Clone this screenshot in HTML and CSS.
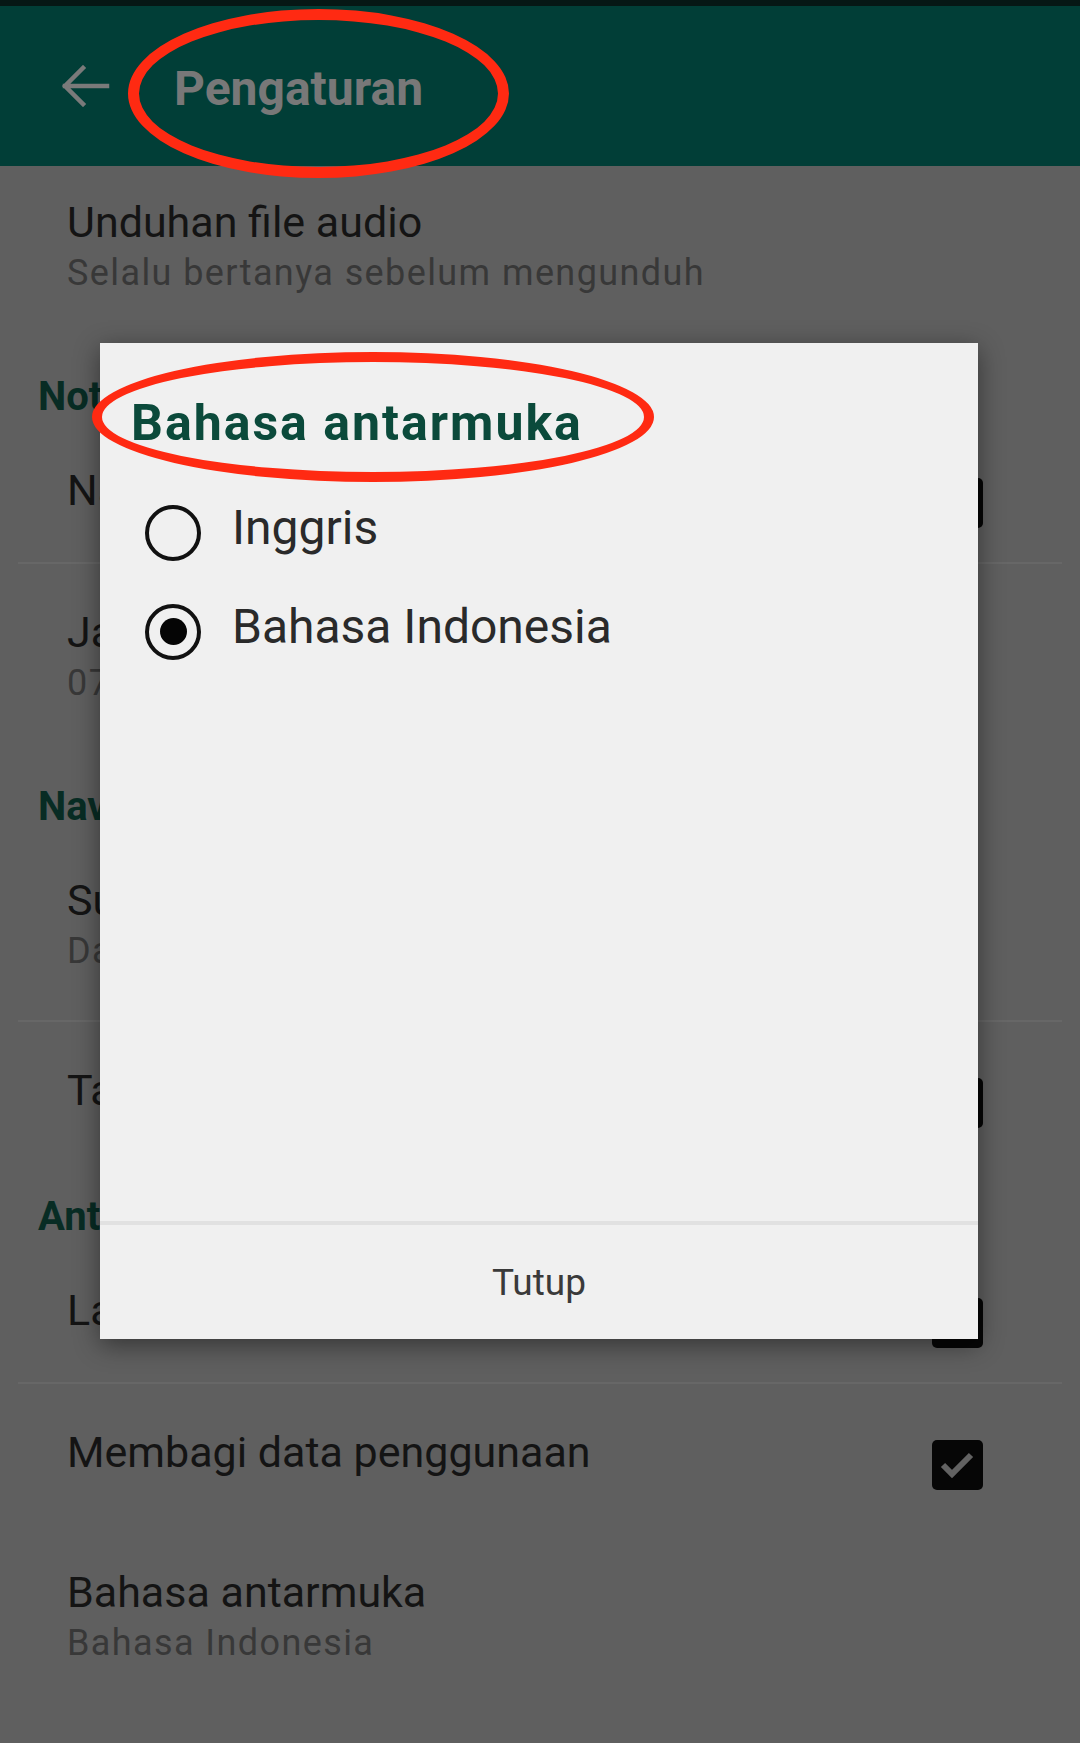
FILE: index.html
```html
<!DOCTYPE html>
<html lang="id">
	<head>
		<title>Pengaturan</title>
		<meta charset="UTF-8">
		<meta content="width=device-width,initial-scale=1.0" name="viewport">
		<link rel="stylesheet" href="styles.css">
	</head>
	<body>
		<div id="statusBar"></div>
		<div id="appBar">
			<svg class="back" width="50" height="42" viewBox="0 0 50 42">
				<path d="M47 21 H5 M23 3 L5 21 L23 39" fill="none" stroke="#7a7a7a" stroke-width="4.5" stroke-linecap="square"/>
			</svg>
			<h1>Pengaturan</h1>
			<div class="mark markTitle"></div>
		</div>

		<div id="settings">
			<div class="item">
				<div class="text">
					<div class="title">Unduhan file audio</div>
					<div class="sub">Selalu bertanya sebelum mengunduh</div>
				</div>
			</div>

			<h3 class="group">Notifikasi</h3>
			<div class="item divided">
				<div class="text"><div class="title">Nada notifikasi</div></div>
				<div class="check"></div>
			</div>
			<div class="item">
				<div class="text">
					<div class="title">Jadwal pengingat</div>
					<div class="sub">07:00</div>
				</div>
			</div>

			<h3 class="group">Navigasi</h3>
			<div class="item divided">
				<div class="text">
					<div class="title">Surah pembuka</div>
					<div class="sub">Daftar surah</div>
				</div>
			</div>
			<div class="item">
				<div class="text"><div class="title">Tampilkan terjemahan</div></div>
				<div class="check"></div>
			</div>

			<h3 class="group">Antarmuka</h3>
			<div class="item divided">
				<div class="text"><div class="title">Layar tetap menyala</div></div>
				<div class="check"></div>
			</div>
			<div class="item">
				<div class="text"><div class="title">Membagi data penggunaan</div></div>
				<div class="check">
					<svg width="51" height="50" viewBox="0 0 51 50">
						<path d="M11 25 L20 34 L39 15" fill="none" stroke="#626262" stroke-width="6"/>
					</svg>
				</div>
			</div>
			<div class="item">
				<div class="text">
					<div class="title">Bahasa antarmuka</div>
					<div class="sub">Bahasa Indonesia</div>
				</div>
			</div>
		</div>

		<div id="dialog">
			<h2 class="dlgTitle">Bahasa antarmuka</h2>
			<div class="options">
				<div class="option"><span class="radio"></span><span class="label">Inggris</span></div>
				<div class="option"><span class="radio on"></span><span class="label">Bahasa Indonesia</span></div>
			</div>
			<div class="dlgLine"></div>
			<div class="dlgBtn">Tutup</div>
		</div>
		<div class="mark markDialog"></div>
	</body>
</html>
```

FILE: styles.css
```css
body{margin:0;background:#5f5f5f;font-family:Roboto,"Noto Sans",sans-serif;overflow:hidden;}
#statusBar{height:6px;background:#061715;}
#appBar{height:160px;background:#013e37;display:flex;align-items:center;position:relative;z-index:2;}
#appBar .back{margin-left:60px;}
#appBar h1{margin:4px 0 0 64px;font-size:48px;font-weight:700;color:#787878;}

#settings{margin-top:-12px;}
.item{display:flex;align-items:flex-start;padding:43px 97px 47px 67px;}
.item .text{flex:1;}
.item.divided{border-bottom:2px solid #676767;margin:0 18px;padding-left:49px;padding-right:79px;}
.title{font-size:43px;line-height:50px;color:#141414;}
.sub{font-size:36px;line-height:44px;margin-top:4px;letter-spacing:1.4px;color:#383838;}
.group{margin:0;padding:30px 0 0 38px;font-size:40px;line-height:50px;font-weight:700;color:#082c24;}
.check{width:51px;height:50px;margin:13px 0 -13px;background:#060606;border-radius:5px;}
.check svg{display:block;}

#dialog{position:absolute;left:100px;top:343px;width:878px;height:996px;background:#f0f0f0;
	display:flex;flex-direction:column;box-shadow:0 6px 24px rgba(0,0,0,0.45);}
.dlgTitle{margin:0;padding:52px 0 0 31px;font-size:50px;line-height:56px;letter-spacing:2px;font-weight:700;color:#0b4a3b;}
.options{flex:1;padding:32px 0 0 45px;}
.option{display:flex;align-items:center;height:99px;}
.radio{width:56px;height:56px;box-sizing:border-box;border:4px solid #111;border-radius:50%;
	display:flex;align-items:center;justify-content:center;}
.radio.on::after{content:"";width:27px;height:27px;border-radius:50%;background:#050505;}
.label{margin:0 0 10px 31px;font-size:48px;color:#2a2a2a;}
.dlgLine{height:4px;background:#e1e1e1;}
.dlgBtn{height:114px;display:flex;align-items:center;justify-content:center;font-size:37px;color:#3a3a3a;}

.mark{position:absolute;border:11px solid #ff2a12;border-radius:50%;box-sizing:border-box;}
.markTitle{left:128px;top:3px;width:381px;height:169px;}
.markDialog{left:92px;top:352px;width:562px;height:130px;border-width:10px;z-index:3;}
```
